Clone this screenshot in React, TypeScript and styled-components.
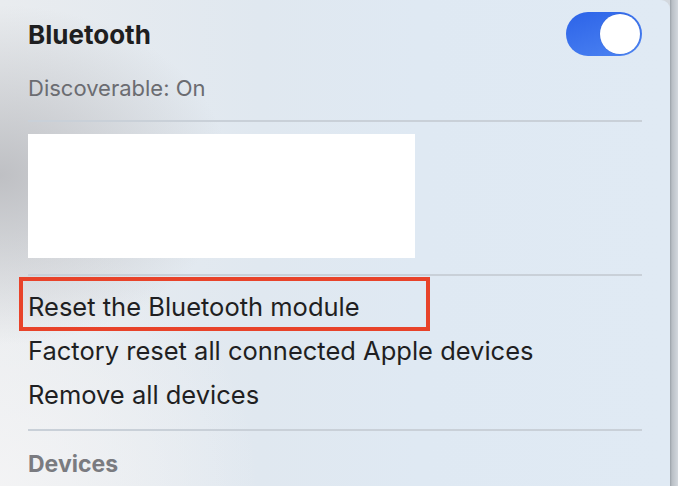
import React from 'react'
import styled, { createGlobalStyle } from 'styled-components'

const GlobalStyle = createGlobalStyle`
  html, body {
    margin: 0;
    padding: 0;
    background: #d3d8de;
  }
  body {
    font-family: Inter, "Liberation Sans", sans-serif;
    -webkit-font-smoothing: antialiased;
  }
`

export default function App() {
  return (
    <>
      <GlobalStyle />
      <Page>
        <Panel>
          <HeaderRow>
            <Title>Bluetooth</Title>
            <Toggle>
              <Knob />
            </Toggle>
          </HeaderRow>
          <Sub>Discoverable: On</Sub>
          <Divider $top={10} />
          <Blank />
          <Divider $top={16} />
          <Action $top={8}>
            Reset the Bluetooth module
            <Highlight />
          </Action>
          <Action>Factory reset all connected Apple devices</Action>
          <Action>Remove all devices</Action>
          <Divider $top={13} />
          <Section>Devices</Section>
        </Panel>
        <Edge />
      </Page>
    </>
  )
}

const Page = styled.div`
  display: flex;
  width: 678px;
  height: 486px;
  overflow: hidden;
`

const Panel = styled.div`
  width: 670px;
  height: 486px;
  box-sizing: border-box;
  padding: 12px 28px 0 28px;
  display: flex;
  flex-direction: column;
  border-top-right-radius: 9px;
  background:
    radial-gradient(ellipse 230px 170px at 0px 175px, rgba(186, 187, 191, 0.9), rgba(186, 187, 191, 0) 100%),
    radial-gradient(ellipse 260px 260px at 0px 486px, rgba(244, 244, 245, 0.9), rgba(244, 244, 245, 0) 100%),
    linear-gradient(90deg, #e9ecef 0px, #e0e8f0 260px, #dfe9f3 420px, #e0eaf4 670px);
`

const Edge = styled.div`
  flex: 1;
  background: linear-gradient(90deg, #9aa1a8 0px, #b9bfc5 2px, #d2d7dd 8px);
`

const HeaderRow = styled.div`
  height: 44px;
  display: flex;
  align-items: center;
  justify-content: space-between;
`

const Title = styled.div`
  font-size: 26px;
  font-weight: 700;
  color: #1e1e20;
`

const Toggle = styled.div`
  width: 76px;
  height: 44px;
  border-radius: 22px;
  background: linear-gradient(160deg, #2c63e8, #4d84f2);
  display: flex;
  align-items: center;
  justify-content: flex-end;
  padding: 0 2px;
  box-sizing: border-box;
`

const Knob = styled.div`
  width: 40px;
  height: 40px;
  border-radius: 50%;
  background: #ffffff;
  box-shadow: 0 0 0 0.5px rgba(0, 0, 0, 0.08);
`

const Sub = styled.div`
  margin-top: 10px;
  height: 44px;
  display: flex;
  align-items: center;
  font-size: 22px;
  color: #6b6c71;
`

const Divider = styled.div<{ $top: number }>`
  margin-top: ${p => p.$top}px;
  height: 2px;
  background: #c9d0d8;
  flex-shrink: 0;
`

const Blank = styled.div`
  margin-top: 12px;
  width: 387px;
  height: 124px;
  background: #ffffff;
  flex-shrink: 0;
`

const Action = styled.div<{ $top?: number }>`
  position: relative;
  margin-top: ${p => p.$top ?? 0}px;
  height: 44px;
  display: flex;
  align-items: center;
  font-size: 25.5px;
  color: #1f1f22;
  flex-shrink: 0;
`

const Highlight = styled.div`
  position: absolute;
  left: -9px;
  top: -7px;
  width: 411px;
  height: 54px;
  border: 4px solid #e8432a;
  box-sizing: border-box;
  pointer-events: none;
`

const Section = styled.div`
  margin-top: 11px;
  height: 44px;
  display: flex;
  align-items: center;
  font-size: 23px;
  font-weight: 700;
  color: #7a7b80;
`
